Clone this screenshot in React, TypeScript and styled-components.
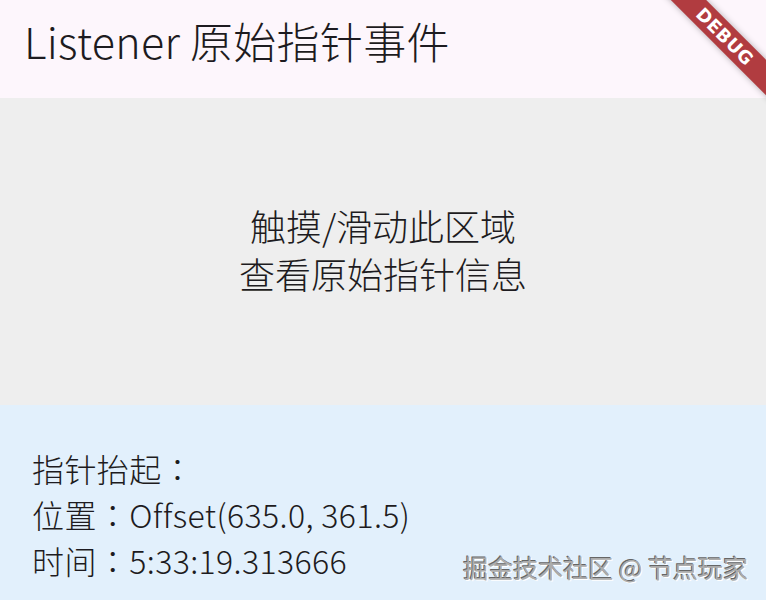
import React from "react";
import styled, { createGlobalStyle } from "styled-components";

const GlobalStyle = createGlobalStyle`
  html, body {
    margin: 0;
    padding: 0;
    width: 100%;
    height: 100%;
    overflow: hidden;
  }
  body {
    font-family: "Noto Sans CJK SC", "Noto Sans", sans-serif;
    color: #1d1b20;
  }
`;

const Screen = styled.div`
  position: relative;
  width: 766px;
  height: 600px;
  overflow: hidden;
  display: flex;
  flex-direction: column;
`;

const AppBar = styled.header`
  flex: 0 0 98px;
  background: #fdf6fc;
  display: flex;
  align-items: center;
  padding: 0 24px;
  box-sizing: border-box;
`;

const Title = styled.h1`
  margin: 0;
  font-size: 43px;
  font-weight: 300;
  line-height: 1;
  color: #1d1b20;
  padding-bottom: 18px;
  letter-spacing: 0.3px;
`;

const TouchArea = styled.section`
  flex: 0 0 307px;
  background: #eeeeee;
  display: flex;
  align-items: center;
  justify-content: center;
`;

const CenterText = styled.p`
  margin: 0 0 6px;
  font-size: 36px;
  font-weight: 300;
  line-height: 48px;
  text-align: center;
  color: #1d1b20;
`;

const InfoPanel = styled.section`
  flex: 1;
  background: #e2f0fc;
  padding: 40px 32px 0;
  box-sizing: border-box;
  display: flex;
  flex-direction: column;
`;

const InfoLine = styled.div`
  font-size: 32px;
  font-weight: 300;
  line-height: 46px;
  letter-spacing: 0.4px;
  color: #1d1b20;
  white-space: nowrap;
`;

const Colon = styled.span`
  font-family: "Noto Sans CJK TC", "Noto Sans CJK SC", sans-serif;
`;

const Watermark = styled.div`
  position: absolute;
  right: 18px;
  bottom: 16px;
  font-size: 25px;
  line-height: 34px;
  color: #acacac;
  text-shadow: -1px -1px 0 #666666, 1px 1px 0 #ffffff;
  white-space: nowrap;
`;

const DebugBanner = styled.div`
  position: absolute;
  left: 625px;
  top: 24px;
  width: 200px;
  height: 25px;
  transform: rotate(45deg);
  background: #b13c40;
  box-shadow: 0 0 6px rgba(0, 0, 0, 0.3);
  display: flex;
  align-items: center;
  justify-content: center;
  color: #ffffff;
  font-family: "DejaVu Sans", "Liberation Sans", sans-serif;
  font-weight: 900;
  font-size: 18px;
  letter-spacing: 0.5px;
  line-height: 1;
`;

export default function App() {
  return (
    <>
      <GlobalStyle />
      <Screen>
        <AppBar>
          <Title>Listener 原始指针事件</Title>
        </AppBar>
        <TouchArea>
          <CenterText>
            触摸/滑动此区域
            <br />
            查看原始指针信息
          </CenterText>
        </TouchArea>
        <InfoPanel>
          <InfoLine>
            指针抬起<Colon>：</Colon>
          </InfoLine>
          <InfoLine>
            位置<Colon>：</Colon>Offset(635.0, 361.5)
          </InfoLine>
          <InfoLine>
            时间<Colon>：</Colon>5:33:19.313666
          </InfoLine>
        </InfoPanel>
        <Watermark>掘金技术社区 @ 节点玩家</Watermark>
        <DebugBanner>DEBUG</DebugBanner>
      </Screen>
    </>
  );
}
